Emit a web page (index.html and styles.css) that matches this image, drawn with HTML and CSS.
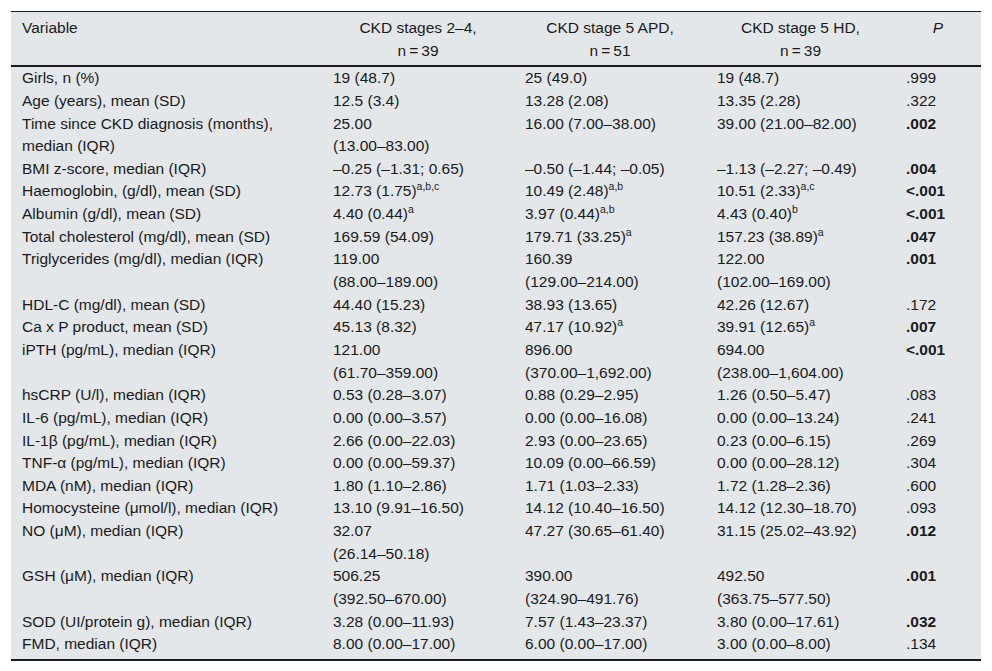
FILE: index.html
```html
<!DOCTYPE html>
<html lang="en">
<head>
<meta charset="utf-8">
<title>Table</title>
<link rel="stylesheet" href="styles.css">
</head>
<body>
<div class="page">
<table class="data">
<colgroup>
<col class="c1"><col class="c2"><col class="c3"><col class="c4"><col class="c5">
</colgroup>
<thead>
<tr>
<th class="var">Variable</th>
<th>CKD stages 2–4,<br>n&#8201;=&#8201;39</th>
<th>CKD stage 5 APD,<br>n&#8201;=&#8201;51</th>
<th>CKD stage 5 HD,<br>n&#8201;=&#8201;39</th>
<th><i>P</i></th>
</tr>
</thead>
<tbody>
<tr><td>Girls, n (%)</td><td>19 (48.7)</td><td>25 (49.0)</td><td>19 (48.7)</td><td>.999</td></tr>
<tr><td>Age (years), mean (SD)</td><td>12.5 (3.4)</td><td>13.28 (2.08)</td><td>13.35 (2.28)</td><td>.322</td></tr>
<tr><td>Time since CKD diagnosis (months),<br>median (IQR)</td><td>25.00<br>(13.00–83.00)</td><td>16.00 (7.00–38.00)</td><td>39.00 (21.00–82.00)</td><td><b>.002</b></td></tr>
<tr><td>BMI z-score, median (IQR)</td><td>–0.25 (–1.31; 0.65)</td><td>–0.50 (–1.44; –0.05)</td><td>–1.13 (–2.27; –0.49)</td><td><b>.004</b></td></tr>
<tr><td>Haemoglobin, (g/dl), mean (SD)</td><td>12.73 (1.75)<sup>a,b,c</sup></td><td>10.49 (2.48)<sup>a,b</sup></td><td>10.51 (2.33)<sup>a,c</sup></td><td><b>&lt;.001</b></td></tr>
<tr><td>Albumin (g/dl), mean (SD)</td><td>4.40 (0.44)<sup>a</sup></td><td>3.97 (0.44)<sup>a,b</sup></td><td>4.43 (0.40)<sup>b</sup></td><td><b>&lt;.001</b></td></tr>
<tr><td>Total cholesterol (mg/dl), mean (SD)</td><td>169.59 (54.09)</td><td>179.71 (33.25)<sup>a</sup></td><td>157.23 (38.89)<sup>a</sup></td><td><b>.047</b></td></tr>
<tr><td>Triglycerides (mg/dl), median (IQR)</td><td>119.00<br>(88.00–189.00)</td><td>160.39<br>(129.00–214.00)</td><td>122.00<br>(102.00–169.00)</td><td><b>.001</b></td></tr>
<tr><td>HDL-C (mg/dl), mean (SD)</td><td>44.40 (15.23)</td><td>38.93 (13.65)</td><td>42.26 (12.67)</td><td>.172</td></tr>
<tr><td>Ca x P product, mean (SD)</td><td>45.13 (8.32)</td><td>47.17 (10.92)<sup>a</sup></td><td>39.91 (12.65)<sup>a</sup></td><td><b>.007</b></td></tr>
<tr><td>iPTH (pg/mL), median (IQR)</td><td>121.00<br>(61.70–359.00)</td><td>896.00<br>(370.00–1,692.00)</td><td>694.00<br>(238.00–1,604.00)</td><td><b>&lt;.001</b></td></tr>
<tr><td>hsCRP (U/l), median (IQR)</td><td>0.53 (0.28–3.07)</td><td>0.88 (0.29–2.95)</td><td>1.26 (0.50–5.47)</td><td>.083</td></tr>
<tr><td>IL-6 (pg/mL), median (IQR)</td><td>0.00 (0.00–3.57)</td><td>0.00 (0.00–16.08)</td><td>0.00 (0.00–13.24)</td><td>.241</td></tr>
<tr><td>IL-1β (pg/mL), median (IQR)</td><td>2.66 (0.00–22.03)</td><td>2.93 (0.00–23.65)</td><td>0.23 (0.00–6.15)</td><td>.269</td></tr>
<tr><td>TNF-α (pg/mL), median (IQR)</td><td>0.00 (0.00–59.37)</td><td>10.09 (0.00–66.59)</td><td>0.00 (0.00–28.12)</td><td>.304</td></tr>
<tr><td>MDA (nM), median (IQR)</td><td>1.80 (1.10–2.86)</td><td>1.71 (1.03–2.33)</td><td>1.72 (1.28–2.36)</td><td>.600</td></tr>
<tr><td>Homocysteine (μmol/l), median (IQR)</td><td>13.10 (9.91–16.50)</td><td>14.12 (10.40–16.50)</td><td>14.12 (12.30–18.70)</td><td>.093</td></tr>
<tr><td>NO (μM), median (IQR)</td><td>32.07<br>(26.14–50.18)</td><td>47.27 (30.65–61.40)</td><td>31.15 (25.02–43.92)</td><td><b>.012</b></td></tr>
<tr><td>GSH (μM), median (IQR)</td><td>506.25<br>(392.50–670.00)</td><td>390.00<br>(324.90–491.76)</td><td>492.50<br>(363.75–577.50)</td><td><b>.001</b></td></tr>
<tr><td>SOD (UI/protein g), median (IQR)</td><td>3.28 (0.00–11.93)</td><td>7.57 (1.43–23.37)</td><td>3.80 (0.00–17.61)</td><td><b>.032</b></td></tr>
<tr class="last"><td>FMD, median (IQR)</td><td>8.00 (0.00–17.00)</td><td>6.00 (0.00–17.00)</td><td>3.00 (0.00–8.00)</td><td>.134</td></tr>
</tbody>
</table>
</div>
</body>
</html>
```
FILE: styles.css
```css
html, body {
  margin: 0;
  padding: 0;
  background: #ffffff;
}
.page {
  padding: 11px 11px;
}
.data {
  width: 970px;
  table-layout: fixed;
  border-collapse: collapse;
  background: #e3e7ea;
  font-family: "Liberation Sans", Arial, sans-serif;
  font-size: 15.5px;
  color: #1a1a1a;
  border-top: 1px solid #1a1a1a;
  border-bottom: 2px solid #1a1a1a;
}
.c1 { width: 311px; }
.c2 { width: 192px; }
.c3 { width: 192px; }
.c4 { width: 189px; }
.c5 { width: 86px; }
.data th {
  font-weight: normal;
  text-align: center;
  vertical-align: top;
  padding: 5px 11px 3px;
  line-height: 22.64px;
  border-bottom: 2px solid #1a1a1a;
}
.data th.var {
  text-align: left;
}
.data td {
  vertical-align: top;
  text-align: left;
  padding: 0 11px;
  line-height: 22.64px;
  white-space: nowrap;
}
.data tr.last td {
  padding-bottom: 3px;
}
.data tbody tr:first-child td {
  padding-top: 0;
}
.data sup {
  font-size: 10.5px;
  line-height: 0;
  vertical-align: 6px;
}
.data b {
  font-weight: bold;
}
```
